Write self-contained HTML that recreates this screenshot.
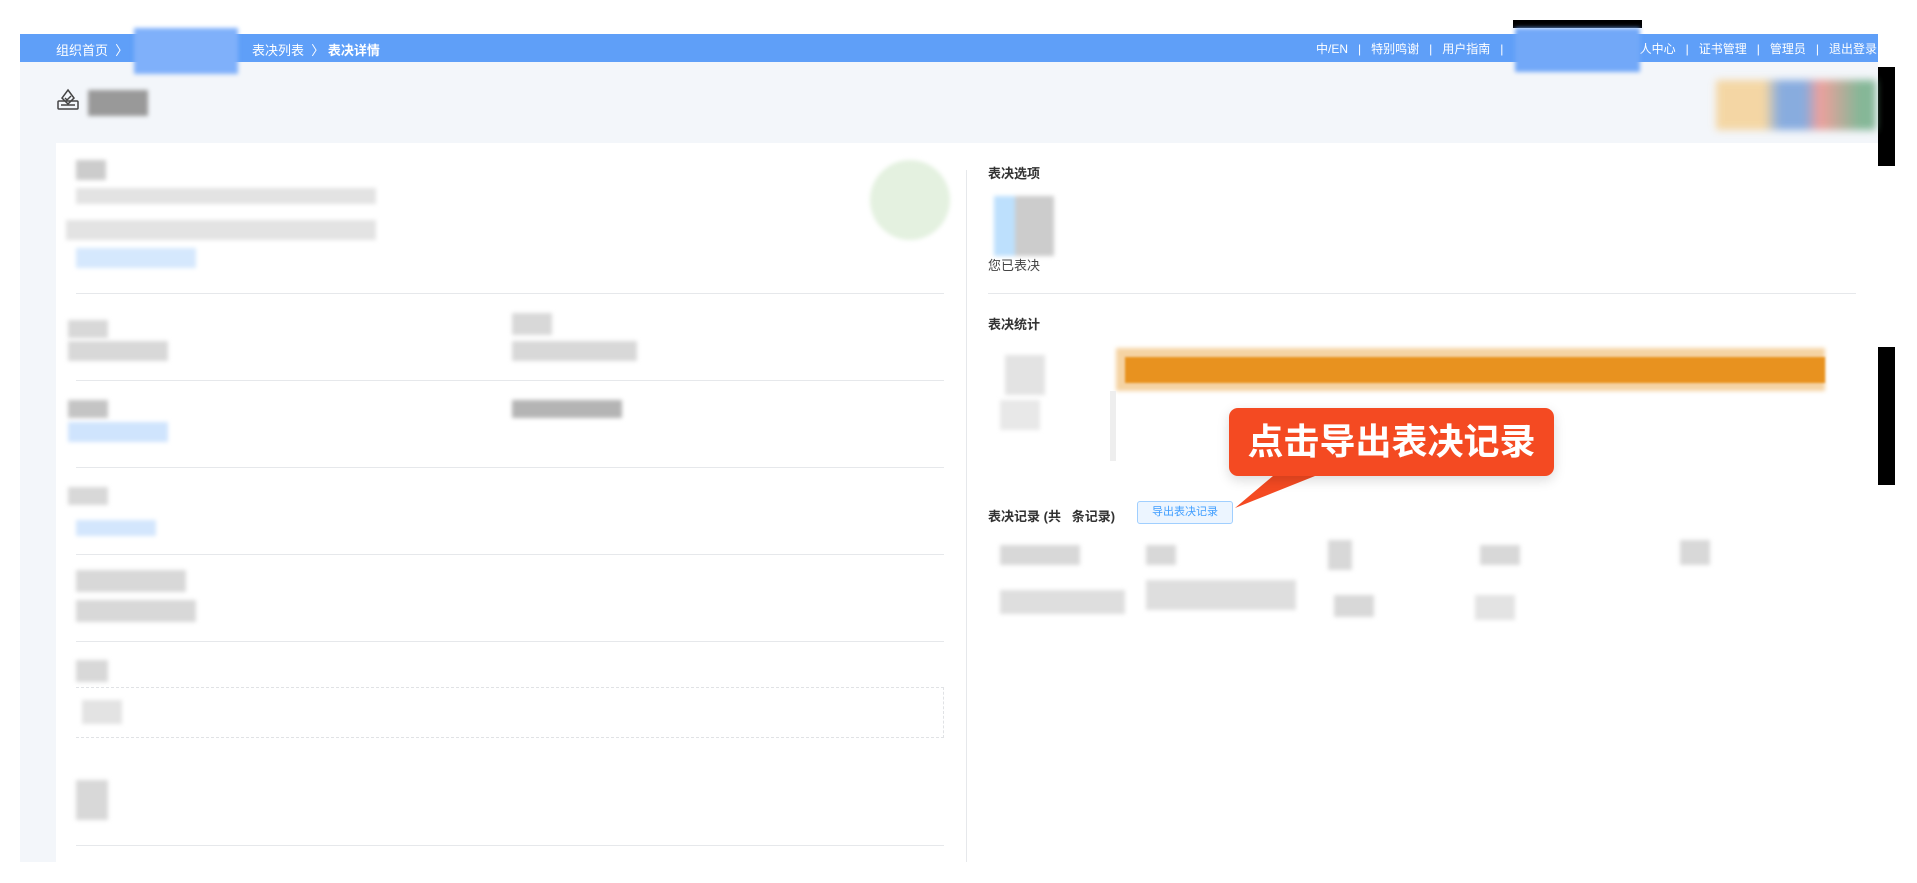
<!DOCTYPE html>
<html><head><meta charset="utf-8"><style>
*{margin:0;padding:0;box-sizing:border-box}
body{width:1917px;height:883px;background:#fff;position:relative;overflow:hidden;font-family:"Liberation Sans","Noto Sans CJK SC",sans-serif;}
.a{position:absolute;white-space:nowrap}
.bar{left:20px;top:34px;width:1858px;height:28px;background:#5f9ff8;color:#fff;font-size:13px;}
.bg{left:20px;top:62px;width:1858px;height:800px;background:#f3f6fa}
.card{left:56px;top:143px;width:1822px;height:719px;background:#fff}
.hl{height:1px;background:#e6e8eb}
.g{background:#d8d8d8;filter:blur(2px)}
.t{font-size:13px;color:#333;font-weight:bold}
</style></head><body>
<div class="a bg"></div>
<div class="a bar">
 <div class="a" style="left:36px;top:6px">组织首页 &nbsp;〉</div>
 <div class="a" style="left:114px;top:-6px;width:104px;height:46px;background:#7fb0fa;filter:blur(2px)"></div>
 <div class="a" style="left:232px;top:6px">表决列表 &nbsp;〉 <b>表决详情</b></div>
 <div class="a" style="left:1296px;top:6px;font-size:12px">中/EN &nbsp;&nbsp;| &nbsp;&nbsp;特别鸣谢 &nbsp;&nbsp;| &nbsp;&nbsp;用户指南 &nbsp;&nbsp;|</div>
 <div class="a" style="right:1px;top:6px;font-size:12px">人中心 &nbsp;&nbsp;| &nbsp;&nbsp;证书管理 &nbsp;&nbsp;| &nbsp;&nbsp;管理员 &nbsp;&nbsp;| &nbsp;&nbsp;退出登录</div>
</div>
<div class="a" style="left:1513px;top:20px;width:129px;height:8px;background:#000"></div>
<div class="a" style="left:1515px;top:28px;width:125px;height:44px;background:#72a8f8;filter:blur(2px)"></div>
<div class="a" style="left:1878px;top:67px;width:17px;height:99px;background:#000"></div>
<div class="a" style="left:1878px;top:347px;width:17px;height:138px;background:#000"></div>
<svg class="a" style="left:56px;top:88px" width="24" height="24" viewBox="0 0 24 24" fill="none" stroke="#444" stroke-width="1.5"><path d="M12 2 L18 10 L12 16 L6 10 Z"/><path d="M9 10 l2 2 l4 -4"/><rect x="2" y="13" width="20" height="8" rx="1"/><path d="M5 17 h14"/></svg>
<div class="a g" style="left:88px;top:90px;width:60px;height:26px;background:#999"></div>
<div class="a" style="left:1716px;top:80px;width:160px;height:50px;background:linear-gradient(90deg,#f5cf8f,#f5cf8f 30%,#6e9ad8 40%,#6e9ad8 55%,#ee8b85 65%,#6aa87f 90%);filter:blur(4px);opacity:.8"></div>
<div class="a card"></div>
<div class="a g" style="left:76px;top:160px;width:30px;height:20px;background:#ccc"></div>
<div class="a g" style="left:76px;top:188px;width:300px;height:16px;background:#e3e3e3"></div>
<div class="a g" style="left:66px;top:220px;width:310px;height:20px;background:#e3e3e3"></div>
<div class="a g" style="left:76px;top:248px;width:120px;height:20px;background:#d5e8fd"></div>
<div class="a g" style="left:870px;top:160px;width:80px;height:80px;background:#e4f1e0;border-radius:40px"></div>
<div class="a hl" style="left:76px;top:293px;width:868px"></div>
<div class="a hl" style="left:76px;top:380px;width:868px"></div>
<div class="a hl" style="left:76px;top:467px;width:868px"></div>
<div class="a hl" style="left:76px;top:554px;width:868px"></div>
<div class="a hl" style="left:76px;top:641px;width:868px"></div>
<div class="a hl" style="left:76px;top:845px;width:868px"></div>
<div class="a" style="left:76px;top:687px;width:868px;height:51px;border:1px dashed #e0e2e5;border-left:none"></div>
<div class="a g" style="left:68px;top:320px;width:40px;height:18px"></div>
<div class="a g" style="left:68px;top:341px;width:100px;height:20px"></div>
<div class="a g" style="left:512px;top:313px;width:40px;height:22px"></div>
<div class="a g" style="left:512px;top:341px;width:125px;height:20px"></div>
<div class="a g" style="left:68px;top:400px;width:40px;height:18px;background:#c4c4c4"></div>
<div class="a g" style="left:68px;top:422px;width:100px;height:20px;background:#cfe4fd"></div>
<div class="a g" style="left:512px;top:400px;width:110px;height:18px;background:#b4b4b4"></div>
<div class="a g" style="left:68px;top:487px;width:40px;height:18px"></div>
<div class="a g" style="left:76px;top:520px;width:80px;height:16px;background:#d3e6fd"></div>
<div class="a g" style="left:76px;top:570px;width:110px;height:22px"></div>
<div class="a g" style="left:76px;top:600px;width:120px;height:22px"></div>
<div class="a g" style="left:76px;top:660px;width:32px;height:22px"></div>
<div class="a g" style="left:82px;top:700px;width:40px;height:24px;background:#e3e3e3"></div>
<div class="a g" style="left:76px;top:780px;width:32px;height:40px"></div>
<div class="a" style="left:966px;top:170px;width:1px;height:692px;background:#e6e8eb"></div>
<div class="a t" style="left:988px;top:163px">表决选项</div>
<div class="a g" style="left:994px;top:196px;width:60px;height:60px;background:linear-gradient(90deg,#bde0fd 35%,#ccc 35%)"></div>
<div class="a" style="left:988px;top:255px;font-size:13px;color:#444">您已表决</div>
<div class="a hl" style="left:988px;top:293px;width:868px"></div>
<div class="a t" style="left:988px;top:314px">表决统计</div>
<div class="a g" style="left:1005px;top:355px;width:40px;height:40px;background:#e3e3e3"></div>
<div class="a g" style="left:1000px;top:400px;width:40px;height:30px;background:#e8e8e8"></div>
<div class="a" style="left:1116px;top:348px;width:709px;height:43px;background:#f5d3a3;filter:blur(2px)"></div>
<div class="a" style="left:1125px;top:357px;width:700px;height:26px;background:#e8921f;filter:blur(1px)"></div>
<div class="a" style="left:1110px;top:391px;width:6px;height:70px;background:#eee"></div>
<div class="a t" style="left:988px;top:506px">表决记录 (共 &nbsp; 条记录)</div>
<div class="a" style="left:1137px;top:501px;width:96px;height:23px;background:#ecf5ff;border:1px solid #a0cfff;border-radius:3px;color:#409eff;font-size:11px;text-align:center;line-height:21px">导出表决记录</div>
<svg class="a" style="left:1230px;top:460px" width="120" height="50"><path d="M50 10 L100 10 L5 48 Z" fill="#f44a22"/></svg>
<div class="a" style="left:1229px;top:408px;width:325px;height:68px;background:#f44a22;border-radius:9px;color:#fff;font-weight:bold;font-size:36px;text-align:center;line-height:68px;box-shadow:0 4px 12px rgba(0,0,0,.15)">点击导出表决记录</div>
<div class="a g" style="left:1000px;top:545px;width:80px;height:20px"></div>
<div class="a g" style="left:1146px;top:545px;width:30px;height:20px"></div>
<div class="a g" style="left:1328px;top:540px;width:24px;height:30px"></div>
<div class="a g" style="left:1480px;top:545px;width:40px;height:20px"></div>
<div class="a g" style="left:1680px;top:540px;width:30px;height:25px"></div>
<div class="a g" style="left:1000px;top:590px;width:125px;height:24px;background:#dedede"></div>
<div class="a g" style="left:1146px;top:580px;width:150px;height:30px;background:#dedede"></div>
<div class="a g" style="left:1334px;top:595px;width:40px;height:22px"></div>
<div class="a g" style="left:1475px;top:595px;width:40px;height:25px;background:#e3e3e3"></div>
</body></html>
